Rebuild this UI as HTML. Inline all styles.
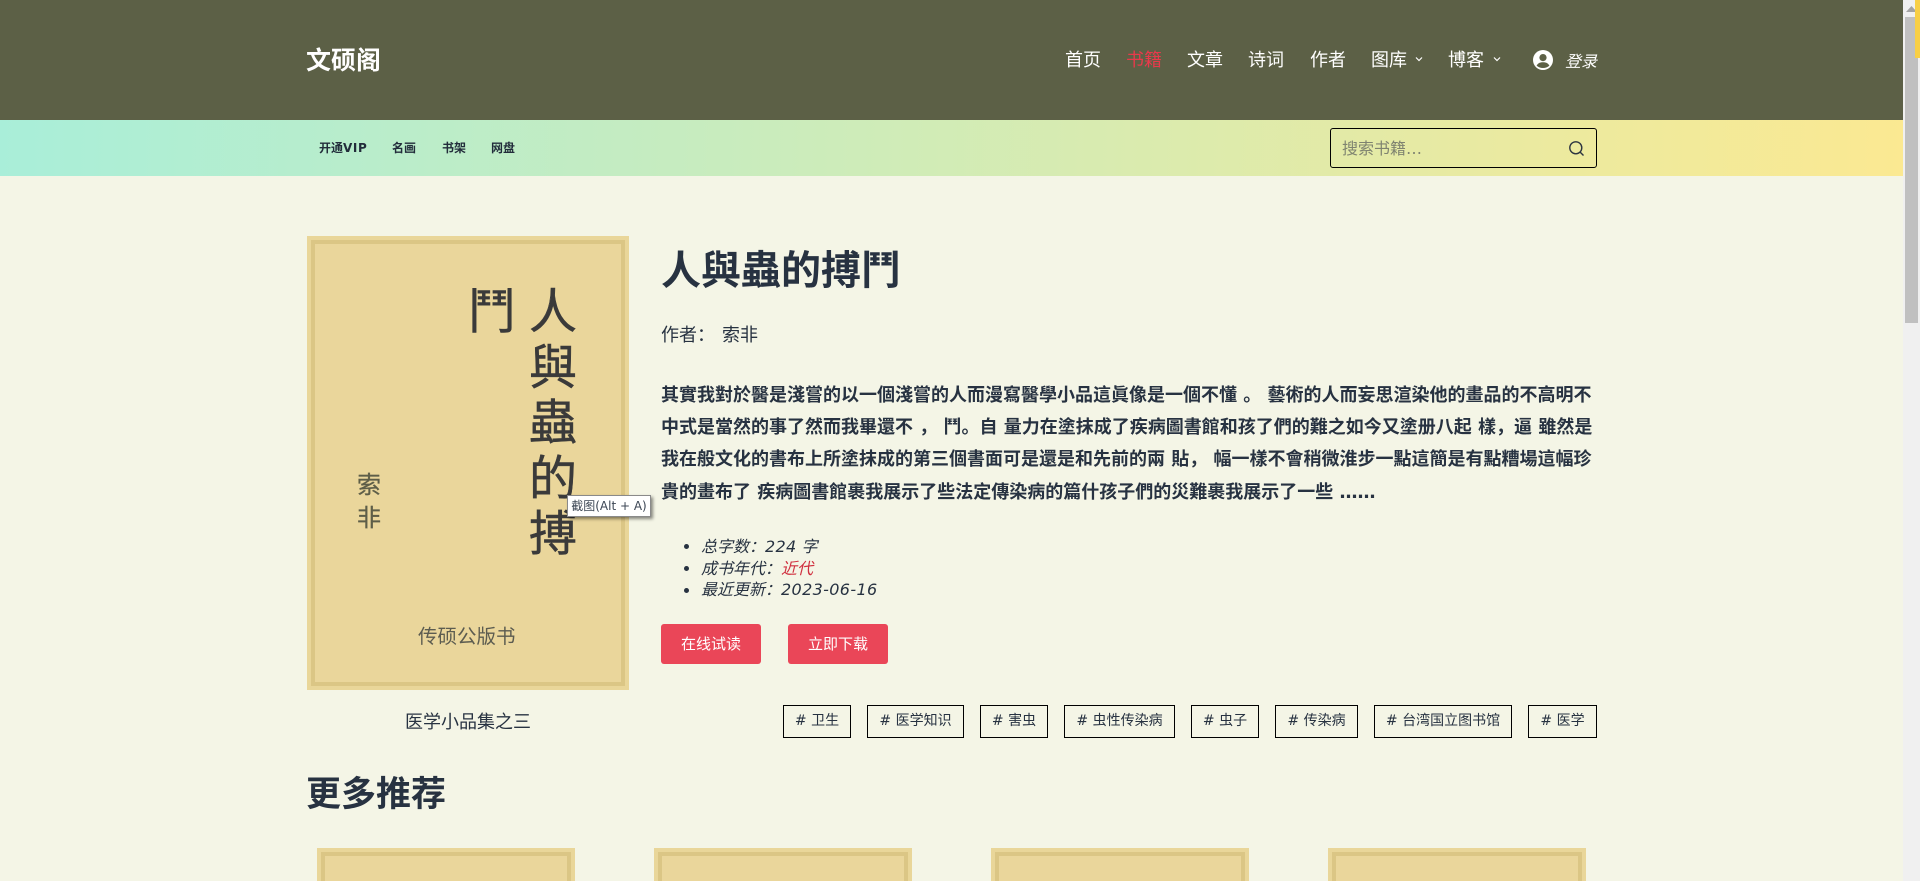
<!DOCTYPE html>
<html lang="zh">
<head>
<meta charset="utf-8">
<title>人與蟲的搏鬥</title>
<style>
*{box-sizing:border-box;margin:0;padding:0}
html,body{width:1920px;height:881px;overflow:hidden;background:#f4f5e6}
body{position:relative;font-family:"DejaVu Sans","Noto Sans CJK SC",sans-serif;color:#273241}
.a{position:absolute;white-space:pre}
.hd{position:absolute;left:0;top:0;width:1903px;height:120px;background:#5c6046}
.sub{position:absolute;left:0;top:120px;width:1903px;height:56px;background:linear-gradient(92deg,#a9eed9 0%,#fbe992 100%)}
.nav{font-size:18px;line-height:24px;color:#fff;top:49px}
.s{font-size:12px;font-weight:bold;line-height:16px;top:140px;color:#222d3b}
.cover{position:absolute;background:#ead69b;border:4px solid #e9d699;box-shadow:inset 0 0 0 4px #dbc685}
.d{left:661px;font-size:18px;font-weight:bold;line-height:32px;color:#273241}
.li{left:701px;font-size:16px;font-style:italic;line-height:22px;color:#273241}
.dot{position:absolute;left:684px;width:5px;height:5px;border-radius:50%;background:#273241}
.btn{position:absolute;top:624px;width:100px;height:40px;background:#ea4658;border-radius:3px;color:#fff;font-size:15px;line-height:40px;text-align:center}
.tag{position:absolute;top:705px;height:33px;border:1px solid #000;font-size:14px;line-height:31px;text-align:center;color:#273241;white-space:pre}
</style>
</head>
<body>
<div class="hd"></div>
<div class="sub"></div>

<div class="a" style="left:306px;top:45px;font-size:25px;font-weight:bold;line-height:32px;color:#fff">文硕阁</div>
<div class="a nav" style="left:1065px">首页</div>
<div class="a nav" style="left:1126px;color:#e8394b">书籍</div>
<div class="a nav" style="left:1187px">文章</div>
<div class="a nav" style="left:1248px">诗词</div>
<div class="a nav" style="left:1310px">作者</div>
<div class="a nav" style="left:1371px">图库</div>
<svg class="a" style="left:1415px;top:55px" width="8" height="8" viewBox="0 0 8 8"><path d="M1 2.5L4 5.5L7 2.5" fill="none" stroke="#fff" stroke-width="1.2"/></svg>
<div class="a nav" style="left:1448px">博客</div>
<svg class="a" style="left:1493px;top:55px" width="8" height="8" viewBox="0 0 8 8"><path d="M1 2.5L4 5.5L7 2.5" fill="none" stroke="#fff" stroke-width="1.2"/></svg>
<svg class="a" style="left:1533px;top:50px" width="20" height="20" viewBox="0 0 20 20"><circle cx="10" cy="10" r="10" fill="#fff"/><circle cx="10" cy="7.6" r="3.6" fill="#5c6046"/><path d="M3.6 15.6C5 12.8 7.4 12.2 10 12.2S15 12.8 16.4 15.6C14.8 17.2 12.6 18 10 18S5.2 17.2 3.6 15.6Z" fill="#5c6046"/></svg>
<div class="a" style="left:1565px;top:51px;font-size:16px;font-style:italic;line-height:22px;color:#fff">登录</div>

<div class="a s" style="left:319px">开通<span style="letter-spacing:.6px">VIP</span></div>
<div class="a s" style="left:392px">名画</div>
<div class="a s" style="left:442px">书架</div>
<div class="a s" style="left:491px">网盘</div>

<div style="position:absolute;left:1330px;top:128px;width:267px;height:40px;border:1px solid #000;border-radius:3px"></div>
<div class="a" style="left:1342px;top:137px;font-size:16px;line-height:24px;color:#7f8370">搜索书籍…</div>
<svg class="a" style="left:1568px;top:140px" width="17" height="17" viewBox="0 0 17 17"><circle cx="7.8" cy="7.8" r="6" fill="none" stroke="#2c3440" stroke-width="1.4"/><path d="M12 12L15.5 15.5" stroke="#2c3440" stroke-width="1.4" fill="none"/></svg>

<!-- main cover -->
<div class="cover" style="left:307px;top:236px;width:322px;height:454px"></div>
<div class="a" style="left:529px;top:285px;width:48px;font-size:48px;line-height:55.5px;color:#3a3a3a;text-align:center;-webkit-text-stroke:.5px #3a3a3a">人<br>與<br>蟲<br>的<br>搏</div>
<div class="a" style="left:468px;top:285px;width:48px;font-size:48px;line-height:55.5px;color:#3a3a3a;text-align:center;-webkit-text-stroke:.5px #3a3a3a">鬥</div>
<div class="a" style="left:356px;top:469px;width:26px;font-size:24px;line-height:33px;color:#5e5e48;text-align:center;-webkit-text-stroke:.3px #5e5e48">索<br>非</div>
<div class="a" style="left:418px;top:623px;font-size:19.5px;line-height:28px;color:#5c5c50">传硕公版书</div>
<div class="a" style="left:405px;top:710px;font-size:18px;line-height:26px">医学小品集之三</div>

<!-- details -->
<div class="a" style="left:661px;top:244px;font-size:40px;font-weight:bold;line-height:54px;color:#273241">人與蟲的搏鬥</div>
<div class="a" style="left:661px;top:323px;font-size:18px;line-height:26px">作者：<span style="margin-left:7px">索非</span></div>
<div class="a d" style="top:380px">其實我對於醫是淺嘗的以一個淺嘗的人而漫寫醫學小品這眞像是一個不懂 。 藝術的人而妄思渲染他的畫品的不高明不</div>
<div class="a d" style="top:412px">中式是當然的事了然而我畢還不 ， 鬥。自 量力在塗抹成了疾病圖書館和孩了們的難之如今又塗册八起 樣，逼 雖然是</div>
<div class="a d" style="top:444px">我在般文化的書布上所塗抹成的第三個書面可是還是和先前的兩 貼， 幅一樣不會稍微淮步一點這簡是有點糟場這幅珍</div>
<div class="a d" style="top:477px">貴的畫布了 疾病圖書館裹我展示了些法定傳染病的篇什孩子們的災難裹我展示了一些 ……</div>

<span class="dot" style="top:544px"></span>
<span class="dot" style="top:566px"></span>
<span class="dot" style="top:588px"></span>
<div class="a li" style="top:536px">总字数：<span style="letter-spacing:.3px">224</span> 字</div>
<div class="a li" style="top:558px">成书年代：<span style="color:#d0303f">近代</span></div>
<div class="a li" style="top:579px">最近更新：<span style="letter-spacing:.35px">2023-06-16</span></div>

<div class="btn" style="left:661px">在线试读</div>
<div class="btn" style="left:788px">立即下载</div>

<div class="tag" style="left:783px;width:68px"># 卫生</div>
<div class="tag" style="left:867px;width:97px"># 医学知识</div>
<div class="tag" style="left:980px;width:68px"># 害虫</div>
<div class="tag" style="left:1064px;width:111px"># 虫性传染病</div>
<div class="tag" style="left:1191px;width:68px"># 虫子</div>
<div class="tag" style="left:1275px;width:83px"># 传染病</div>
<div class="tag" style="left:1374px;width:138px"># 台湾国立图书馆</div>
<div class="tag" style="left:1528px;width:69px"># 医学</div>

<div class="a" style="left:306px;top:770px;font-size:35px;font-weight:bold;line-height:50px;color:#273241">更多推荐</div>

<div class="cover" style="left:317px;top:848px;width:258px;height:100px"></div>
<div class="cover" style="left:654px;top:848px;width:258px;height:100px"></div>
<div class="cover" style="left:991px;top:848px;width:258px;height:100px"></div>
<div class="cover" style="left:1328px;top:848px;width:258px;height:100px"></div>

<!-- tooltip -->
<div class="a" style="left:567px;top:495px;width:84px;height:22px;background:#fff;border:1px solid #8a8a8a;box-shadow:2px 2px 3px rgba(0,0,0,.45);font-size:12px;line-height:20px;color:#3c4654;text-align:center">截图(Alt + A)</div>

<!-- scrollbar -->
<div style="position:absolute;left:1903px;top:0;width:17px;height:881px;background:#f0f0f0"></div>
<div style="position:absolute;left:1905px;top:17px;width:13px;height:306px;background:#c0c0c0"></div>
<svg class="a" style="left:1906px;top:6px" width="11" height="6" viewBox="0 0 11 6"><path d="M5.5 0L11 6H0Z" fill="#a3a3a3"/></svg>
<div style="position:absolute;left:1915px;top:0;width:5px;height:58px;background:#f8cf45"></div>
</body>
</html>
